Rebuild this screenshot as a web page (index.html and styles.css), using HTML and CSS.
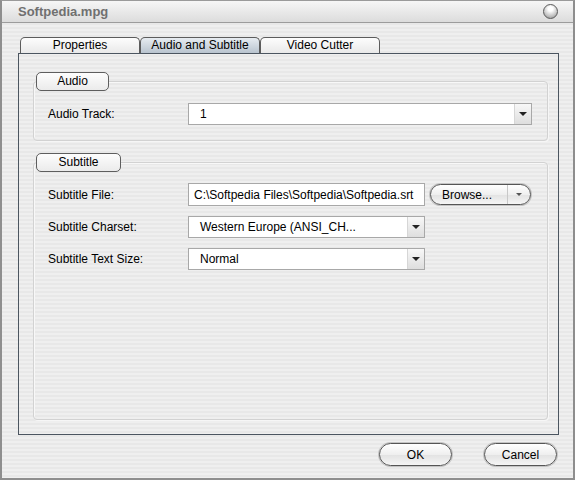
FILE: index.html
```html
<!DOCTYPE html>
<html>
<head>
<title>Softpedia.mpg</title>
<link rel="stylesheet" href="styles.css">
</head>
<body>
<div class="window">
  <div class="titlebar">
    <span class="title">Softpedia.mpg</span>
    <span class="close"></span>
  </div>
  <div class="content">
    <div class="tabs">
      <div class="tab">Properties</div>
      <div class="tab active">Audio and Subtitle</div>
      <div class="tab">Video Cutter</div>
    </div>
    <div class="panel">
      <fieldset class="group audio">
        <legend><span>Audio</span></legend>
        <div class="row">
          <label>Audio Track:</label>
          <div class="select wide"><span>1</span><i class="arrow"></i></div>
        </div>
      </fieldset>
      <fieldset class="group subtitle">
        <legend><span>Subtitle</span></legend>
        <div class="row">
          <label>Subtitle File:</label>
          <div class="field">C:\Softpedia Files\Softpedia\Softpedia.srt</div>
          <div class="browse"><span>Browse...</span><i class="mini"></i></div>
        </div>
        <div class="row">
          <label>Subtitle Charset:</label>
          <div class="select"><span>Western Europe (ANSI_CH...</span><i class="arrow"></i></div>
        </div>
        <div class="row">
          <label>Subtitle Text Size:</label>
          <div class="select"><span>Normal</span><i class="arrow"></i></div>
        </div>
      </fieldset>
    </div>
    <div class="buttons">
      <button class="btn">OK</button>
      <button class="btn">Cancel</button>
    </div>
  </div>
</div>
</body>
</html>
```
FILE: styles.css
```css
/* ventana */
body {
  margin: 0;
  font-family: "Liberation Sans", Arial, sans-serif;
  font-size: 12px;
  color: #000;
}

.window {
  width: 575px;
  height: 480px;
  box-sizing: border-box;
  border: 2px solid #8e8e8e;
  border-top: 1px solid #9a9a9a;
  background: repeating-linear-gradient(#efefef 0 2px, #e8e8e8 2px 4px);
}

.titlebar {
  height: 21px;
  border-bottom: 1px solid #9c9c9c;
  background: linear-gradient(#f6f6f6, #dcdcdc);
  display: flex;
  align-items: center;
  justify-content: space-between;
  padding: 0 15px 0 16px;
}

.title {
  font-weight: bold;
  font-size: 13px;
  color: #707070;
}

.close {
  width: 13px;
  height: 13px;
  border-radius: 50%;
  border: 1px solid #5a5a5a;
  background: radial-gradient(circle at 50% 30%, #ffffff 0 20%, #c8c8c8 60%, #8a8a8a);
}

/* pestañas */
.content {
  padding: 14px 15px 0 16px;
}

.tabs {
  display: flex;
  height: 16px;
  padding-left: 2px;
}

.tab {
  width: 120px;
  height: 16px;
  box-sizing: border-box;
  border: 1px solid #5c5c5c;
  border-bottom: none;
  border-radius: 5px 5px 0 0;
  background: linear-gradient(#fdfdfd, #e9e9e9);
  text-align: center;
  line-height: 15px;
}

.tab.active {
  background: linear-gradient(#e7ecf1, #b9c4cf);
}

.panel {
  width: 541px;
  height: 382px;
  box-sizing: border-box;
  border: 1px solid #4b5560;
  padding: 18px 10px 14px 14px;
  display: flex;
  flex-direction: column;
}

/* grupos */
.group {
  margin: 0;
  padding: 0 0 0 14px;
  width: 515px;
  box-sizing: border-box;
  border: 1px solid #d2d2d2;
  border-radius: 4px;
  box-shadow: inset 1px 1px 0 #f8f8f8, 1px 1px 0 #f6f6f6;
}

.group legend {
  margin-left: -12px;
  width: 73px;
  height: 19px;
  box-sizing: border-box;
  padding: 0;
  border: 1px solid #5e5e5e;
  border-radius: 5px;
  background: linear-gradient(#fdfdfd, #ebebeb);
  text-align: left;
  line-height: 17px;
}

.group legend span {
  display: block;
  text-align: center;
}

.subtitle legend {
  width: 85px;
}

.audio {
  padding-bottom: 15px;
}

.audio .row {
  margin-top: 12px;
}

.subtitle {
  margin-top: 12px;
  flex: 1;
}

.subtitle .row {
  margin-top: 11px;
  height: 23px;
}

.subtitle .row + .row {
  margin-top: 9px;
}

.row {
  display: flex;
  align-items: center;
  height: 22px;
}

label {
  width: 140px;
}

.select,
.field {
  height: 22px;
  box-sizing: border-box;
  border: 1px solid #a8a8a8;
  background: #fff;
  display: flex;
  align-items: center;
}

.select {
  width: 237px;
}

.select.wide {
  width: 344px;
}

.select span {
  flex: 1;
  padding-left: 11px;
}

.field {
  width: 237px;
  height: 23px;
  padding-left: 5px;
  white-space: nowrap;
  overflow: hidden;
}

.arrow {
  width: 16px;
  height: 100%;
  border-left: 1px solid #d6d6d6;
  background: linear-gradient(#f8f8f8, #dedede);
  position: relative;
}

.arrow::after {
  content: "";
  position: absolute;
  left: 4px;
  top: 8px;
  border: 4px solid transparent;
  border-top: 4px solid #222;
  border-bottom: none;
}

/* botones */
.browse {
  margin-left: 5px;
  width: 101px;
  height: 21px;
  box-sizing: border-box;
  border: 1px solid #555;
  border-radius: 11px;
  box-shadow: 0 0 0 1px #c4c4c4;
  background: linear-gradient(#ffffff, #efefef 50%, #e2e2e2 51%, #f5f5f5);
  display: flex;
  align-items: center;
}

.browse span {
  flex: 1;
  padding-left: 11px;
}

.mini {
  width: 22px;
  height: 100%;
  border-left: 1px solid #c8c8c8;
  position: relative;
}

.mini::after {
  content: "";
  position: absolute;
  left: 8px;
  top: 8px;
  border: 3px solid transparent;
  border-top: 3px solid #555;
  border-bottom: none;
}

.buttons {
  display: flex;
  justify-content: flex-end;
  gap: 32px;
  margin-top: 8px;
  padding-right: 1px;
}

.btn {
  width: 73px;
  height: 23px;
  border: 1px solid #555;
  border-radius: 12px;
  box-shadow: 0 0 0 1px #c4c4c4;
  background: linear-gradient(#ffffff, #efefef 50%, #e2e2e2 51%, #f5f5f5);
  font-family: "Liberation Sans", Arial, sans-serif;
  font-size: 12px;
  color: #000;
  padding: 0;
}
```
